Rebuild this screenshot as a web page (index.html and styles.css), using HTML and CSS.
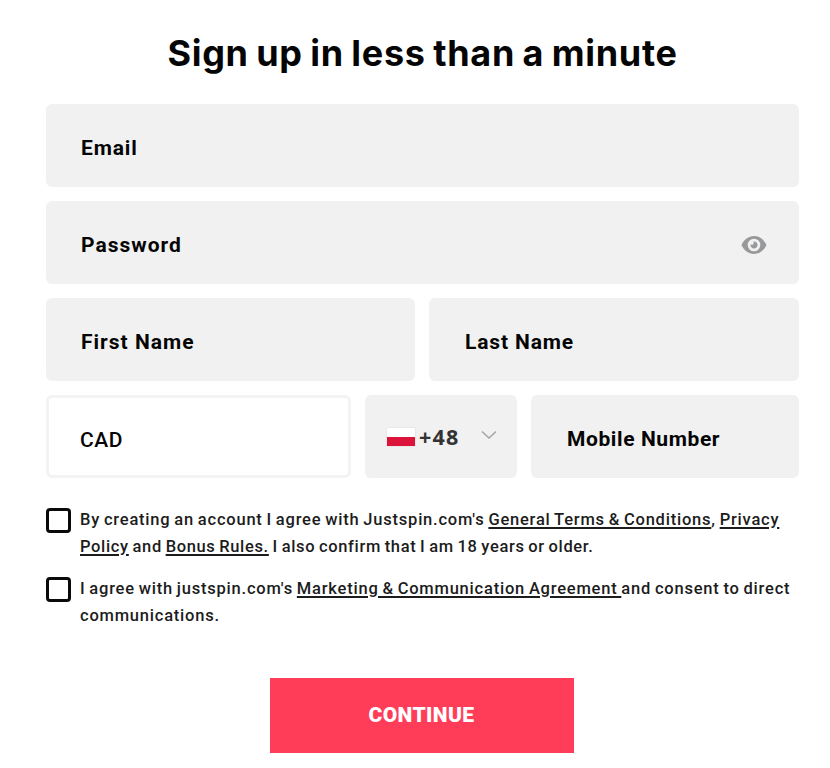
FILE: index.html
```html
<!DOCTYPE html>
<html lang="en">
  <head>
    <meta charset="UTF-8" />
    <meta name="viewport" content="width=device-width, initial-scale=1.0" />
    <title>Sign up</title>
    <link rel="stylesheet" href="styles.css">
  </head>
  <body>
    <form class="signup">
      <h1>Sign up in less than a minute</h1>

      <div class="fields">
        <label class="field">
          <span class="field-label">Email</span>
          <input type="email" name="email" />
        </label>

        <label class="field">
          <span class="field-label label-wide">Password</span>
          <input type="password" name="password" />
          <svg class="eye" viewBox="0 0 26 20">
            <path fill-rule="evenodd" d="M0.5 10C3 4.5 7.500 1 13 1s10 3.500 12.500 9C23 15.500 18.500 19 13 19S3 15.500 0.500 10zM13 3.700a6.300 6.300 0 1 0 0 12.600a6.300 6.300 0 1 0 0-12.600z" />
            <path d="M13 6.500a3.500 3.500 0 1 1-3.400 2.700a1.800 1.800 0 0 0 2.600-2.600z" />
          </svg>
        </label>

        <div class="row row-name">
          <label class="field">
            <span class="field-label label-wide">First Name</span>
            <input type="text" name="firstName" />
          </label>
          <label class="field field-right">
            <span class="field-label">Last Name</span>
            <input type="text" name="lastName" />
          </label>
        </div>

        <div class="row row-phone">
          <div class="field currency"><span>CAD</span></div>
          <div class="field prefix">
            <span class="flag"></span>
            <span class="code">+48</span>
            <svg class="chevron" viewBox="0 0 16 10">
              <path d="M1 1.500l7 6.500l7-6.500" />
            </svg>
          </div>
          <label class="field field-right">
            <span class="field-label label-mobile">Mobile Number</span>
            <input type="tel" name="mobile" />
          </label>
        </div>
      </div>

      <div class="consents">
        <div class="consent">
          <input type="checkbox" class="checkbox" />
          <p>
            By creating an account I agree with Justspin.com's <a href="#">General Terms &amp; Conditions</a>, <a href="#">Privacy</a><br />
            <span class="tight"><a href="#">Policy</a> and <a href="#">Bonus Rules.</a> I also confirm that I am 18 years or older.</span>
          </p>
        </div>
        <div class="consent">
          <input type="checkbox" class="checkbox" />
          <p>
            I agree with justspin.com's <a href="#">Marketing &amp; Communication Agreement </a>and consent to direct<br />
            communications.
          </p>
        </div>
      </div>

      <button type="button" class="continue">CONTINUE</button>
    </form>
  </body>
</html>
```
FILE: styles.css
```css
* {
  box-sizing: border-box;
}

body {
  margin: 0;
  background: #fff;
  color: #050505;
  font-family: Roboto, sans-serif;
}

.signup {
  width: 753px;
  margin: 0 0 0 46px;
  padding-top: 30px;
  display: flex;
  flex-direction: column;
}

h1 {
  margin: 0 0 28px;
  font-family: Inter, sans-serif;
  font-size: 36px;
  font-weight: 700;
  line-height: 46px;
  letter-spacing: 0.7px;
  word-spacing: -1.7px;
  text-align: center;
  white-space: nowrap;
}

.fields {
  display: flex;
  flex-direction: column;
  gap: 14.5px;
}

.row {
  display: grid;
  gap: 14px;
}

.row-name {
  grid-template-columns: 369px 1fr;
}

.row-phone {
  grid-template-columns: 305px 152px 1fr;
}

.field {
  display: flex;
  align-items: center;
  height: 82.5px;
  padding: 6px 32px 0 35px;
  background: #f1f1f1;
  border-radius: 6px;
}

.field-right {
  padding-left: 36px;
}

.field-label {
  font-size: 21px;
  font-weight: 700;
  line-height: 26px;
  letter-spacing: 0.85px;
  white-space: nowrap;
}

.label-wide {
  letter-spacing: 1px;
}

.label-mobile {
  letter-spacing: 0.6px;
}

.field input {
  flex: 1;
  min-width: 0;
  width: 0;
  border: none;
  outline: none;
  background: transparent;
}

.eye {
  width: 26px;
  height: 20px;
  fill: #97999b;
}

.currency {
  padding: 8px 30px 0 31px;
  background: #fff;
  border: 3px solid #f3f3f3;
  font-size: 21px;
  font-weight: 500;
  letter-spacing: 0.5px;
}

.prefix {
  padding: 1px 20px 0 22px;
}

.flag {
  width: 28px;
  height: 18px;
  background: linear-gradient(#fff 50%, #dc143c 50%);
  box-shadow: 0 0 1px #bbb;
}

.code {
  margin-left: 4px;
  color: #333;
  font-family: "Open Sans", sans-serif;
  font-size: 21.5px;
  font-weight: 700;
  letter-spacing: 1.2px;
}

.chevron {
  width: 16px;
  height: 10px;
  margin: -4px 0 0 auto;
  fill: none;
  stroke: #a5a5a5;
  stroke-width: 1.5;
}

.consents {
  display: flex;
  flex-direction: column;
  gap: 14px;
  margin-top: 28px;
}

.consent {
  display: flex;
  gap: 9px;
}

.checkbox {
  appearance: none;
  flex: none;
  width: 25px;
  height: 25px;
  margin: 2px 0 0;
  border: 3px solid #0a0a0a;
  border-radius: 4px;
  background: #fff;
}

.consent p {
  margin: 0;
  color: #1c1c1c;
  font-size: 16.5px;
  font-weight: 500;
  line-height: 27.5px;
  letter-spacing: 0.78px;
  word-spacing: -1px;
  white-space: nowrap;
}

.consent .tight {
  letter-spacing: 0.65px;
}

.consent a {
  color: inherit;
  text-underline-offset: 2px;
  text-decoration-thickness: 1.5px;
}

.continue {
  align-self: center;
  width: 304px;
  height: 75px;
  margin: 48px 2px 0 0;
  padding: 0;
  border: none;
  background: #ff3d59;
  color: #fff;
  font-family: Roboto, sans-serif;
  font-size: 21px;
  font-weight: 900;
  letter-spacing: 0.4px;
}
```
